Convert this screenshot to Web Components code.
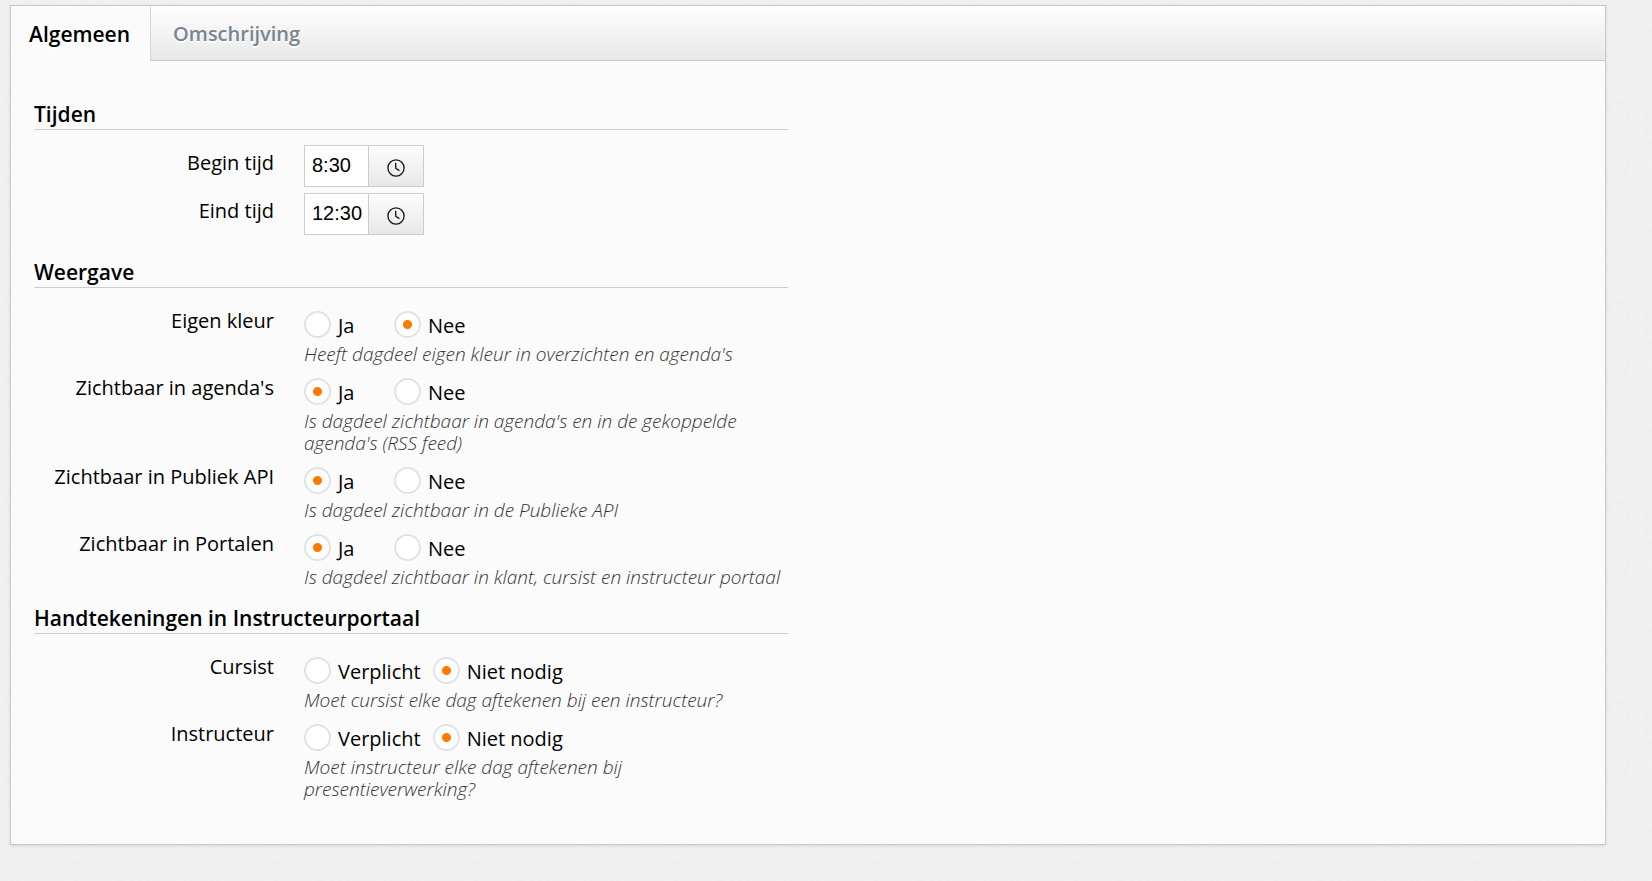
<!DOCTYPE html>
<html lang="nl">
<head>
<meta charset="utf-8">
<title>Dagdeel</title>
<style>
    body {
        margin: 0;
        padding: 5px 46px 36px 10px;
        font-family: "Open Sans", "Noto Sans", sans-serif;
        font-size: 20px;
        color: #000;
        background-color: #f1f1f1;
        background-image: url("data:image/svg+xml,%3Csvg xmlns='http://www.w3.org/2000/svg' width='200' height='200'%3E%3Cfilter id='n' x='0' y='0' width='1' height='1'%3E%3CfeTurbulence type='fractalNoise' baseFrequency='.2' numOctaves='2' stitchTiles='stitch'/%3E%3CfeColorMatrix values='0 0 0 0 .5 0 0 0 0 .52 0 0 0 0 .52 .12 0 0 0 -.045'/%3E%3C/filter%3E%3Crect width='200' height='200' filter='url(%23n)'/%3E%3C/svg%3E");
    }
</style>
</head>
<body>

<tab-panel>
    <tab-item slot="tabs" label="Algemeen" active></tab-item>
    <tab-item slot="tabs" label="Omschrijving"></tab-item>

    <form-section heading="Tijden" spaced>
        <time-field label="Begin tijd" value="8:30"></time-field>
        <time-field label="Eind tijd" value="12:30"></time-field>
    </form-section>

    <form-section heading="Weergave">
        <choice-field label="Eigen kleur" options="Ja,Nee" value="Nee">Heeft dagdeel eigen kleur in overzichten en agenda's</choice-field>
        <choice-field label="Zichtbaar in agenda's" options="Ja,Nee" value="Ja">Is dagdeel zichtbaar in agenda's en in de gekoppelde agenda's (RSS feed)</choice-field>
        <choice-field label="Zichtbaar in Publiek API" options="Ja,Nee" value="Ja">Is dagdeel zichtbaar in de Publieke API</choice-field>
        <choice-field label="Zichtbaar in Portalen" options="Ja,Nee" value="Ja">Is dagdeel zichtbaar in klant, cursist en instructeur portaal</choice-field>
    </form-section>

    <form-section heading="Handtekeningen in Instructeurportaal">
        <choice-field label="Cursist" options="Verplicht,Niet nodig" value="Niet nodig">Moet cursist elke dag aftekenen bij een instructeur?</choice-field>
        <choice-field label="Instructeur" options="Verplicht,Niet nodig" value="Niet nodig">Moet instructeur elke dag aftekenen bij presentieverwerking?</choice-field>
    </form-section>
</tab-panel>

<script>
// label column + field column, shared by every form row
const rowStyles = `
    :host {
        display: grid;
        grid-template-columns: 240px minmax(0, 1fr);
        column-gap: 30px;
        padding-bottom: 6px;
    }

    .label {
        padding-top: 4px;
        line-height: 28px;
        text-align: right;
    }
`;

class TabPanel extends HTMLElement {
    connectedCallback() {
        this.attachShadow({ mode: 'open' });
        this.shadowRoot.innerHTML = `
            <style>
                :host {
                    display: block;
                    background: #fbfbfb;
                    border: 1px solid #c8c8c8;
                    box-shadow: 0 1px 3px rgba(0, 0, 0, 0.1);
                }

                .tabs {
                    display: flex;
                    height: 54px;
                    border-bottom: 1px solid #c8c8c8;
                    background: linear-gradient(#fefefe, #e8e8e8);
                }

                .body {
                    max-width: 754px;
                    padding: 28px 23px 39px;
                }
            </style>

            <div class="tabs" role="tablist"><slot name="tabs"></slot></div>
            <div class="body"><slot></slot></div>
        `;
    }
}

class TabItem extends HTMLElement {
    connectedCallback() {
        const active = this.hasAttribute('active');
        this.attachShadow({ mode: 'open' });
        this.shadowRoot.innerHTML = `
            <style>
                :host {
                    display: block;
                    height: 54px;
                }

                /* the active tab covers the line below the bar */
                :host([active]) {
                    height: 55px;
                }

                button {
                    height: 100%;
                    padding: 2px 22px 0;
                    border: 0;
                    background: none;
                    font: 600 20px/28px "Open Sans", "Noto Sans", sans-serif;
                    color: #7a848f;
                    text-shadow: 0 2px 0 #fff;
                    cursor: pointer;
                }

                :host([active]) button {
                    padding: 0 20px 0 18px;
                    border-right: 1px solid #d4d4d4;
                    background: #fbfbfb;
                    font-size: 21px;
                    color: #000;
                }
            </style>

            <button type="button" role="tab" aria-selected="${active}">${this.getAttribute('label')}</button>
        `;
    }
}

class FormSection extends HTMLElement {
    connectedCallback() {
        this.attachShadow({ mode: 'open' });
        this.shadowRoot.innerHTML = `
            <style>
                :host {
                    display: block;
                }

                :host([spaced]) {
                    padding-bottom: 6px;
                }

                h2 {
                    margin: 0 0 15px;
                    padding: 11px 0 1px;
                    border-bottom: 1px solid #ccc;
                    font-size: 21px;
                    font-weight: 600;
                    line-height: 28px;
                }
            </style>

            <h2>${this.getAttribute('heading')}</h2>
            <slot></slot>
        `;
    }
}

class TimeField extends HTMLElement {
    connectedCallback() {
        this.attachShadow({ mode: 'open' });
        this.shadowRoot.innerHTML = `
            <style>
                ${rowStyles}

                .control {
                    display: flex;
                    height: 42px;
                }

                input,
                button {
                    box-sizing: border-box;
                    margin: 0;
                    border: 1px solid #ccc;
                    border-radius: 0;
                }

                input {
                    width: 64px;
                    padding: 0 0 1px 7px;
                    border-right: 0;
                    background: #fff;
                    font: 20px "Liberation Sans", Arial, sans-serif;
                    color: #000;
                }

                button {
                    display: flex;
                    align-items: center;
                    justify-content: center;
                    width: 56px;
                    padding: 3px 0 0;
                    background: linear-gradient(#fdfdfd, #e8e8e8);
                    cursor: pointer;
                }
            </style>

            <label class="label" for="time">${this.getAttribute('label')}</label>
            <div class="control">
                <input id="time" type="text" value="${this.getAttribute('value')}">
                <button type="button" aria-label="Kies tijd">
                    <svg width="18" height="18" viewBox="0 0 18 18" fill="none" stroke="#111" stroke-width="1.3">
                        <circle cx="9" cy="9" r="8.1"/>
                        <path d="M8.7 3.8V9.2L12.4 11.6"/>
                    </svg>
                </button>
            </div>
        `;
    }
}

class ChoiceField extends HTMLElement {
    connectedCallback() {
        const value = this.getAttribute('value');
        const options = this.getAttribute('options').split(',').map(option => `
            <label class="option">
                <input type="radio" name="choice" value="${option}"${option === value ? ' checked' : ''}>
                <span>${option}</span>
            </label>
        `).join('');

        this.attachShadow({ mode: 'open' });
        this.shadowRoot.innerHTML = `
            <style>
                ${rowStyles}

                .options {
                    display: flex;
                    padding-top: 8px;
                }

                .option {
                    display: flex;
                    box-sizing: border-box;
                    min-width: 90px;
                    gap: 7px;
                    padding-right: 12px;
                    line-height: 27px;
                }

                .option span {
                    padding-top: 1px;
                }

                input {
                    appearance: none;
                    flex: none;
                    width: 27px;
                    height: 27px;
                    margin: 0;
                    border: 2px solid #e2e2e2;
                    border-radius: 50%;
                    background: #fff;
                }

                input:checked {
                    background: radial-gradient(circle, #ff7800 4px, #fff 5px);
                }

                .help {
                    margin: 4px 0 -1px;
                    font-size: 19px;
                    font-style: italic;
                    font-weight: 300;
                    line-height: 22px;
                    color: #333;
                }
            </style>

            <div class="label" id="label">${this.getAttribute('label')}</div>
            <div>
                <div class="options" role="radiogroup" aria-labelledby="label">${options}</div>
                <p class="help"><slot></slot></p>
            </div>
        `;
    }
}

customElements.define('tab-panel', TabPanel);
customElements.define('tab-item', TabItem);
customElements.define('form-section', FormSection);
customElements.define('time-field', TimeField);
customElements.define('choice-field', ChoiceField);
</script>
</body>
</html>
